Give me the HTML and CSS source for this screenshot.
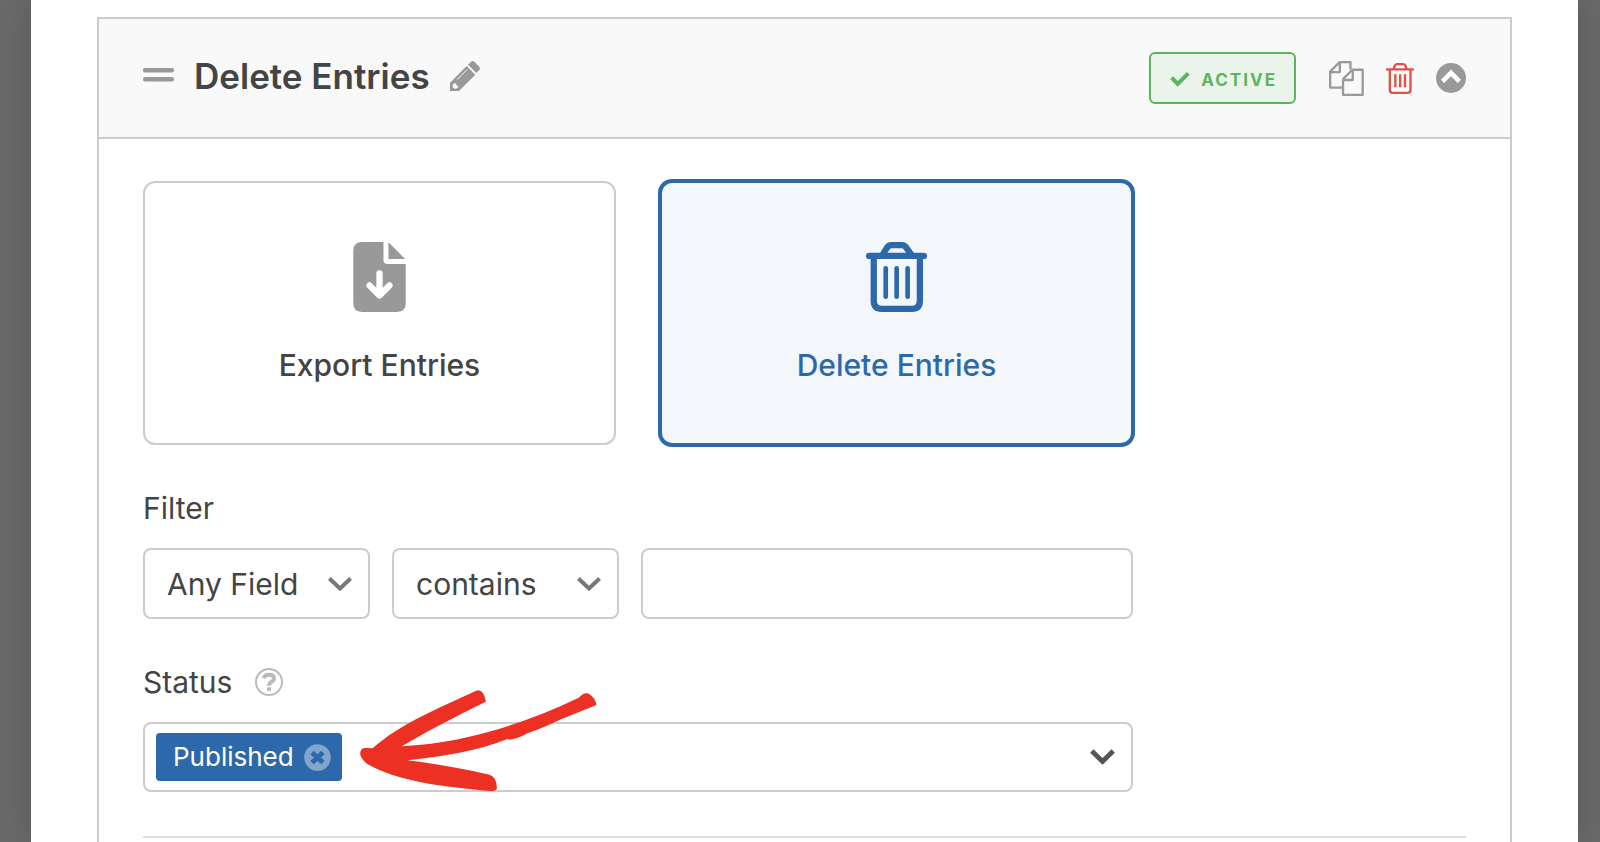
FILE: index.html
```html
<!DOCTYPE html>
<html lang="en">
<head>
<meta charset="utf-8">
<title>Delete Entries</title>
<link rel="stylesheet" href="styles.css">
</head>
<body>
<main class="panel">
  <section class="task">
    <header class="task-header">
      <div class="task-name">
        <button class="icon-button" type="button" aria-label="Reorder task">
          <svg width="31" height="16" viewBox="0 0 31 16" fill="#999"><rect width="31" height="4.4" rx="2"/><rect y="9" width="31" height="4.4" rx="2"/></svg>
        </button>
        <h1 class="task-title">Delete Entries</h1>
        <button class="icon-button" type="button" aria-label="Rename task">
          <svg width="30" height="30" viewBox="1346 185 90 90"><path fill="#999" d="M1346 275V250L1396 200L1422 226L1373 275Z"/><path fill="#999" d="M1400 196L1409 187Q1413 183 1419 187L1434 202Q1438 207 1434 212L1425 221Z"/><path fill="#f9f9f9" d="M1356 253L1364 252L1365 258L1371 259L1369 266L1361 269L1353 262Z"/><path stroke="#f9f9f9" stroke-width="3" stroke-linecap="round" d="M1368 240L1397 211"/></svg>
        </button>
      </div>
      <div class="task-actions">
        <button class="badge" type="button">
          <svg width="20" height="15" viewBox="126 216 58 45"><path fill="none" stroke="#5ab55e" stroke-width="12" d="M130 233L148 252L180 220"/></svg>
          <span>ACTIVE</span>
        </button>
        <button class="icon-button" type="button" aria-label="Duplicate task">
          <svg width="35" height="35" viewBox="597 182 106 106" fill="none" stroke="#999" stroke-width="7" stroke-linejoin="round"><path d="M637 262.500H600.500V214L629 185.500H662V208M600 215.500H630V185"/><path d="M639 237L668 208.500H699V284.500H639.500V237M639 239.500H669V208"/></svg>
        </button>
        <button class="icon-button" type="button" aria-label="Delete task">
          <svg width="28" height="31" viewBox="768 189 84 93" fill="none" stroke="#df5149" stroke-width="7"><path d="M768 208H852M779.500 208V270Q779.500 278.500 788 278.500H833Q841.500 278.500 841.500 270V208M791 207L795 196Q797 192.500 801 192.500H819Q824 192.500 826 196L830 207"/><path d="M796 223V262M810.500 223V262M825 223V262" stroke-width="7"/></svg>
        </button>
        <button class="icon-button" type="button" aria-label="Collapse task">
          <svg width="30" height="30" viewBox="917 189 91 91"><circle cx="962.500" cy="234.500" r="45.500" fill="#999"/><path fill="none" stroke="#fff" stroke-width="14" stroke-linejoin="miter" d="M937 245L962.500 219L988 245"/></svg>
        </button>
      </div>
    </header>

    <div class="task-body">
      <div class="fields">
        <div class="choices">
          <button class="choice" type="button" aria-pressed="false">
            <svg width="53" height="70" viewBox="159 66 158 211"><path fill="#999" d="M185 66H250V120Q250 132 262 132H317V251Q317 277 291 277H185Q159 277 159 251V92Q159 66 185 66ZM265 67L315 117H265Z"/><path fill="none" stroke="#fff" stroke-width="19" stroke-linecap="round" stroke-linejoin="round" d="M238 161V224M208 197L238 227L268 197"/></svg>
            <span>Export Entries</span>
          </button>
          <button class="choice choice-selected" type="button" aria-pressed="true">
            <svg width="61" height="70" viewBox="258 66 183 211" fill="none" stroke="#2d69aa" stroke-width="19" stroke-linecap="round" stroke-linejoin="round"><path d="M267 108H432M281 108V243Q281 267.500 305 267.500H396Q420 267.500 420 243V108"/><path d="M308 104L319 86Q325 75.500 334 75.500H366Q375 75.500 381 86L394 104"/><path stroke-width="14" d="M317 145V231M350 145V231M383 145V231"/></svg>
            <span>Delete Entries</span>
          </button>
        </div>

        <div class="label-row"><label for="filter-field">Filter</label></div>
        <div class="filter-row">
          <div class="select">
            <select id="filter-field"><option>Any Field</option></select>
            <svg class="chevron" width="24" height="14" viewBox="0 0 24 14"><path fill="none" stroke="#777" stroke-width="4" d="M1.400 1.500L12 11.500L22.600 1.500"/></svg>
          </div>
          <div class="select">
            <select aria-label="Comparison"><option>contains</option></select>
            <svg class="chevron" width="24" height="14" viewBox="0 0 24 14"><path fill="none" stroke="#777" stroke-width="4" d="M1.400 1.500L12 11.500L22.600 1.500"/></svg>
          </div>
          <input class="text-input" type="text" aria-label="Filter value">
        </div>

        <div class="label-row">
          <span id="status-label">Status</span>
          <button class="icon-button" type="button" aria-label="Help">
            <svg width="28" height="28" viewBox="378 51 84 84"><circle cx="420" cy="93" r="39" fill="none" stroke="#bbb" stroke-width="6"/><path fill="none" stroke="#bbb" stroke-width="12" d="M404 82Q407 71 420 71Q435 71 435 82Q435 89 427 93Q420 97 420 104"/><rect x="414" y="109" width="12" height="11" rx="2" fill="#bbb"/></svg>
          </button>
        </div>
        <div class="multi" role="group" aria-labelledby="status-label">
          <span class="chip">Published
            <button class="icon-button" type="button" aria-label="Remove Published">
              <svg width="27" height="27" viewBox="0 0 27 27"><circle cx="13.500" cy="13.500" r="13.300" fill="#81a5cc"/><path stroke="#2d69aa" stroke-width="5" d="M8 8.500L19 18.500M19 8.500L8 18.500"/></svg>
            </button>
          </span>
          <button class="icon-button" type="button" aria-label="Show statuses">
            <svg width="25" height="16" viewBox="0 0 25 16"><path fill="none" stroke="#555" stroke-width="4.800" d="M1.800 2L12.500 12.500L23.200 2"/></svg>
          </button>
          <svg class="pointer-arrow" width="237" height="101" viewBox="690 120 710 303"><path fill="#ec3124" d="M690 310Q691 293 707 294L727 295C795 235 870 202 930 172L1038 122Q1060 115 1067 155C970 203 900 238 815 289C990 278 1150 235 1346 143Q1365 122 1380 134Q1397 146 1399 165L1289 209C1240 233 1210 243 1188 251C1175 261 1155 264 1147 268Q1138 270 1132 267C1040 304 940 319 832 331C920 341 1000 356 1078 374Q1101 382 1100 416Q1097 423 1080 423C930 409 800 393 710 341Q690 325 690 310Z"/></svg>
        </div>
      </div>
      <hr class="divider">
    </div>
  </section>
</main>
</body>
</html>
```
FILE: styles.css
```css
* {
  box-sizing: border-box;
}

body {
  margin: 0;
  min-height: 100vh;
  display: flex;
  padding: 0 22px 0 31px;
  overflow: hidden;
  background: #696969;
  color: #444;
  font-family: Inter, "Open Sans", sans-serif;
  font-size: 30px;
  line-height: 36px;
}

button,
select,
input {
  font: inherit;
  color: inherit;
}

svg {
  display: block;
  flex: none;
}

.panel {
  flex: 1;
  display: flex;
  padding: 17px 66px 0;
  background: #fff;
  box-shadow: 0 0 30px rgba(0, 0, 0, 0.15);
}

.task {
  flex: 1;
  border: 2px solid #ccc;
  border-bottom: 0;
}

.task-header {
  display: flex;
  align-items: center;
  justify-content: space-between;
  padding: 33px 44px;
  background: #f9f9f9;
  border-bottom: 2px solid #ccc;
}

.task-name {
  display: flex;
  align-items: center;
  gap: 20px;
  padding-bottom: 4px;
}

.task-title {
  margin: 0;
  font-size: 35px;
  line-height: 44px;
  font-weight: 600;
}

.icon-button {
  padding: 0;
  border: 0;
  background: none;
  cursor: pointer;
}

.task-actions {
  display: flex;
  align-items: center;
  gap: 22px;
}

.badge {
  display: flex;
  align-items: center;
  gap: 11px;
  height: 52px;
  margin-right: 11px;
  padding: 3px 17px 0 19px;
  border: 2px solid #5ab55e;
  border-radius: 6px;
  background: #eaf4ea;
  color: #5ab55e;
  font-size: 17px;
  font-weight: 700;
  letter-spacing: 2px;
}

.task-body {
  padding: 42px 44px 0;
}

.fields {
  max-width: 990px;
}

.choices {
  display: grid;
  grid-template-columns: 1fr 1fr;
  gap: 44px;
}

.choice {
  display: flex;
  flex-direction: column;
  align-items: center;
  gap: 35px;
  padding: 59px 20px 60px;
  border: 2px solid #ccc;
  border-radius: 12px;
  background: #fff;
  font-weight: 500;
}

.choice-selected {
  border-color: #2d69aa;
  box-shadow: 0 0 0 2px #2d69aa;
  background: #f3f6fa;
  color: #2d69aa;
}

.label-row {
  display: flex;
  align-items: center;
  gap: 23px;
  margin: 45px 0 22px;
}

.filter-row {
  display: grid;
  grid-template-columns: 227px 227px 1fr;
  gap: 22px;
}

.select {
  position: relative;
}

.select select,
.text-input {
  width: 100%;
  height: 71px;
  padding: 0 22px;
  border: 2px solid #ccc;
  border-radius: 8px;
  background: #fff;
  appearance: none;
}

.select select {
  padding-top: 1px;
}

.chevron {
  position: absolute;
  right: 18px;
  top: 29px;
  pointer-events: none;
}

.multi {
  position: relative;
  display: flex;
  align-items: center;
  justify-content: space-between;
  height: 70px;
  padding: 0 16px 0 11px;
  border: 2px solid #ccc;
  border-radius: 8px;
}

.chip {
  display: flex;
  align-items: center;
  gap: 10px;
  height: 48px;
  padding: 0 11px 0 17px;
  border-radius: 4px;
  background: #2d69aa;
  color: #fff;
  font-size: 26px;
}

.pointer-arrow {
  position: absolute;
  left: 215px;
  top: -34px;
}

.divider {
  margin: 44px 0 0;
  border: 0;
  border-top: 2px solid #ddd;
}
```
